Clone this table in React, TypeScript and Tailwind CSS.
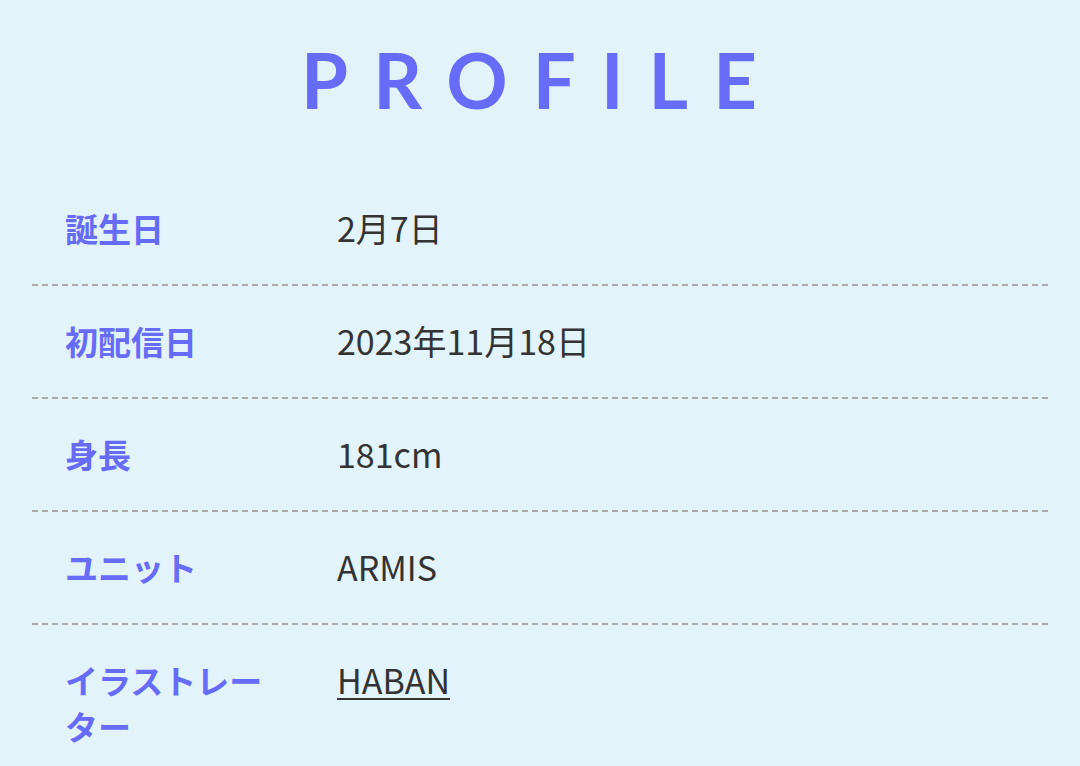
import React from 'react';

interface Row {
  label: string;
  value: string;
  link?: boolean;
}

const rows: Row[] = [
  { label: '誕生日', value: '2月7日' },
  { label: '初配信日', value: '2023年11月18日' },
  { label: '身長', value: '181cm' },
  { label: 'ユニット', value: 'ARMIS' },
  { label: 'イラストレーター', value: 'HABAN', link: true },
];

const App: React.FC = () => {
  return (
    <div className="min-h-screen bg-[#e3f3fa] px-8 font-['Noto_Sans_CJK_JP','Noto_Sans',sans-serif]">
      <h1 className="pt-[36px] pl-[3px] text-center font-['Lato',sans-serif] text-[76px] font-bold leading-[88px] tracking-[0.33em] text-[#666cf8]">
        PROFILE
      </h1>

      <div className="mt-[49px]">
        {rows.map((row, i) => (
          <div key={row.label}>
            <div className="flex pt-[32px] pb-[33px]">
              <div className="w-[273px] shrink-0 pl-[33px] pr-[24px] text-[33px] font-bold leading-[46px] text-[#666cf8]">
                {row.label}
              </div>
              <div className="pl-[32px] text-[34px] leading-[46px] text-[#333333]">
                {row.link ? (
                  <a href="#" className="underline decoration-2 underline-offset-[4px]">
                    {row.value}
                  </a>
                ) : (
                  row.value
                )}
              </div>
            </div>
            {i < rows.length - 1 && (
              <div className="h-[2px] bg-[repeating-linear-gradient(to_right,#a9a9a9_0px,#a9a9a9_6px,transparent_6px,transparent_10px)]" />
            )}
          </div>
        ))}
      </div>
    </div>
  );
};

export default App;
